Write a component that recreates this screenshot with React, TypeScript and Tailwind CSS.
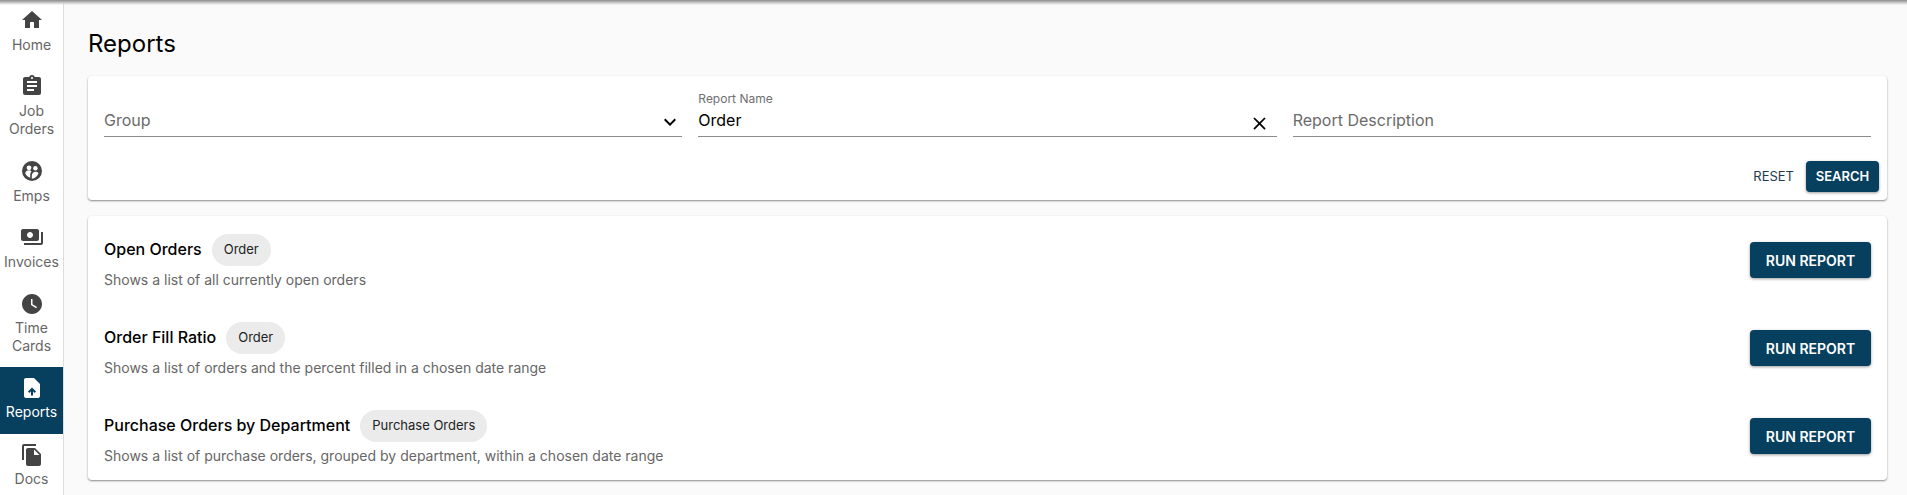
import React from "react";
import {
  MdHome,
  MdAssignment,
  MdPayments,
  MdWatchLater,
  MdFileCopy,
  MdKeyboardArrowDown,
  MdClose,
} from "react-icons/md";

function EmpsIcon({ className }: { className?: string }) {
  return (
    <svg viewBox="0 0 24 24" className={className} fill="currentColor">
      <circle cx="12" cy="12" r="10" />
      <circle cx="9" cy="8.8" r="2.4" fill="#ffffff" />
      <circle cx="15.4" cy="9.2" r="2.2" fill="#ffffff" />
      <path d="M5.2 14.2c.4-1.9 1.9-2.9 3.8-2.9 1 0 1.9.3 2.5.9-.8.9-1.3 2.5-1.3 4.1v2.4c-2.3-.7-4.2-2.3-5-4.5z" fill="#ffffff" />
      <path d="M11.8 19.7V17c0-2.6 1.5-4.2 3.6-4.2 1.3 0 2.4.5 3.1 1.4-1.1 3-3.5 5.2-6.7 5.5z" fill="#ffffff" />
    </svg>
  );
}

function ReportIcon({ className }: { className?: string }) {
  return (
    <svg viewBox="0 0 24 24" className={className} fill="currentColor">
      <path d="M14 2H6c-1.1 0-2 .9-2 2v16c0 1.1.9 2 2 2h12c1.1 0 2-.9 2-2V8z" />
      <path d="M12 11.5l-4 4 1.41 1.41L11 15.34v4.16h2v-4.16l1.59 1.59L16 15.5z" fill="#06405e" />
    </svg>
  );
}

const navItems: { icon: React.ElementType; lines: string[]; h: string; active?: boolean }[] = [
  { icon: MdHome, lines: ["Home"], h: "h-[66px]" },
  { icon: MdAssignment, lines: ["Job", "Orders"], h: "h-[85px]" },
  { icon: EmpsIcon, lines: ["Emps"], h: "h-[66px]" },
  { icon: MdPayments, lines: ["Invoices"], h: "h-[66.5px]" },
  { icon: MdWatchLater, lines: ["Time", "Cards"], h: "h-[84.5px]" },
  { icon: ReportIcon, lines: ["Reports"], h: "h-[66.5px]", active: true },
  { icon: MdFileCopy, lines: ["Docs"], h: "h-[66px]" },
];

const reports = [
  { title: "Open Orders", chip: "Order", desc: "Shows a list of all currently open orders" },
  { title: "Order Fill Ratio", chip: "Order", desc: "Shows a list of orders and the percent filled in a chosen date range" },
  { title: "Purchase Orders by Department", chip: "Purchase Orders", desc: "Shows a list of purchase orders, grouped by department, within a chosen date range" },
];

function NavItem({ icon: Icon, lines, h, active }: { icon: React.ElementType; lines: string[]; h: string; active?: boolean }) {
  return (
    <div className={`${h} ${active ? "bg-[#06405e] text-white" : "text-[#666666]"} flex flex-col items-center pt-[9px]`}>
      <Icon className={active ? "h-6 w-6 text-white" : "h-6 w-6 text-[#444444]"} />
      <div className={`${active ? "mt-[3px]" : "mt-[3.5px]"} text-center text-[14px] leading-[18px]`}>
        {lines.map((l) => (
          <div key={l}>{l}</div>
        ))}
      </div>
    </div>
  );
}

function Field({ label, value, right }: { label?: string; value: string; right?: React.ReactNode }) {
  return (
    <div className="flex h-[48px] flex-1 flex-col justify-end border-b border-[#8c8c8c]">
      {label && <div className="mb-[3px] text-[12px] leading-[14px] text-[#6f6f6f]">{label}</div>}
      <div className="flex h-[27px] items-start justify-between">
        <span className={label ? "text-[16px] leading-[22px] text-black" : "text-[16px] leading-[22px] text-[#6b6b6b]"}>{value}</span>
        {right}
      </div>
    </div>
  );
}

export default function App() {
  return (
    <div className="relative flex h-[495px] w-full overflow-hidden bg-[#fafafa] font-['Inter',sans-serif]">
      <nav className="w-[64px] shrink-0 overflow-hidden border-r border-[#dcdcdc] bg-white">
        <div className="-mt-px">
          {navItems.map((n) => (
            <NavItem key={n.lines[0]} {...n} />
          ))}
        </div>
      </nav>
      <main className="min-w-0 flex-1 pt-[27px] pl-[24px] pr-[20px]">
        <h1 className="text-[24px] leading-[34px] font-normal text-black">Reports</h1>
        <section className="mt-[15px] rounded bg-white px-4 pt-[13px] pb-2 shadow-[0_1px_2px_rgba(0,0,0,0.45)]">
          <div className="flex gap-4">
            <Field value="Group" right={<MdKeyboardArrowDown className="mt-px h-6 w-6 text-black" />} />
            <Field label="Report Name" value="Order" right={<MdClose className="mr-[7px] mt-[3.5px] h-[21px] w-[21px] text-black" />} />
            <Field value="Report Description" />
          </div>
          <div className="-mr-2 mt-[24px] flex items-center justify-end gap-3">
            <button className="text-[13px] font-normal text-[#1d3c50]">RESET</button>
            <button className="h-[31px] w-[73px] rounded bg-[#06405e] text-[13px] font-semibold text-white shadow-[0_1px_3px_rgba(0,0,0,0.4)]">SEARCH</button>
          </div>
        </section>
        <section className="mt-4 rounded bg-white px-4 shadow-[0_1px_2px_rgba(0,0,0,0.45)]">
          {reports.map((r) => (
            <div key={r.title} className="flex h-[88px] items-start justify-between pt-[18px]">
              <div>
                <div className="flex h-8 items-center">
                  <span className="mb-[2px] text-[16px] leading-[22px] font-medium text-black">{r.title}</span>
                  <span className="ml-[10px] flex h-8 items-center rounded-full bg-[#ebebeb] px-3 text-[13px] text-[#222222]">{r.chip}</span>
                </div>
                <div className="mt-[4px] text-[14px] leading-[20px] text-[#666666]">{r.desc}</div>
              </div>
              <button className="mt-[8px] h-[36px] w-[121px] rounded bg-[#06405e] text-[14px] font-semibold text-white shadow-[0_1px_3px_rgba(0,0,0,0.4)]">RUN REPORT</button>
            </div>
          ))}
        </section>
      </main>
      <div className="absolute inset-x-0 top-0 h-[5px] bg-gradient-to-b from-[#8c8c8c] via-[#c4c4c4] to-transparent" />
    </div>
  );
}
